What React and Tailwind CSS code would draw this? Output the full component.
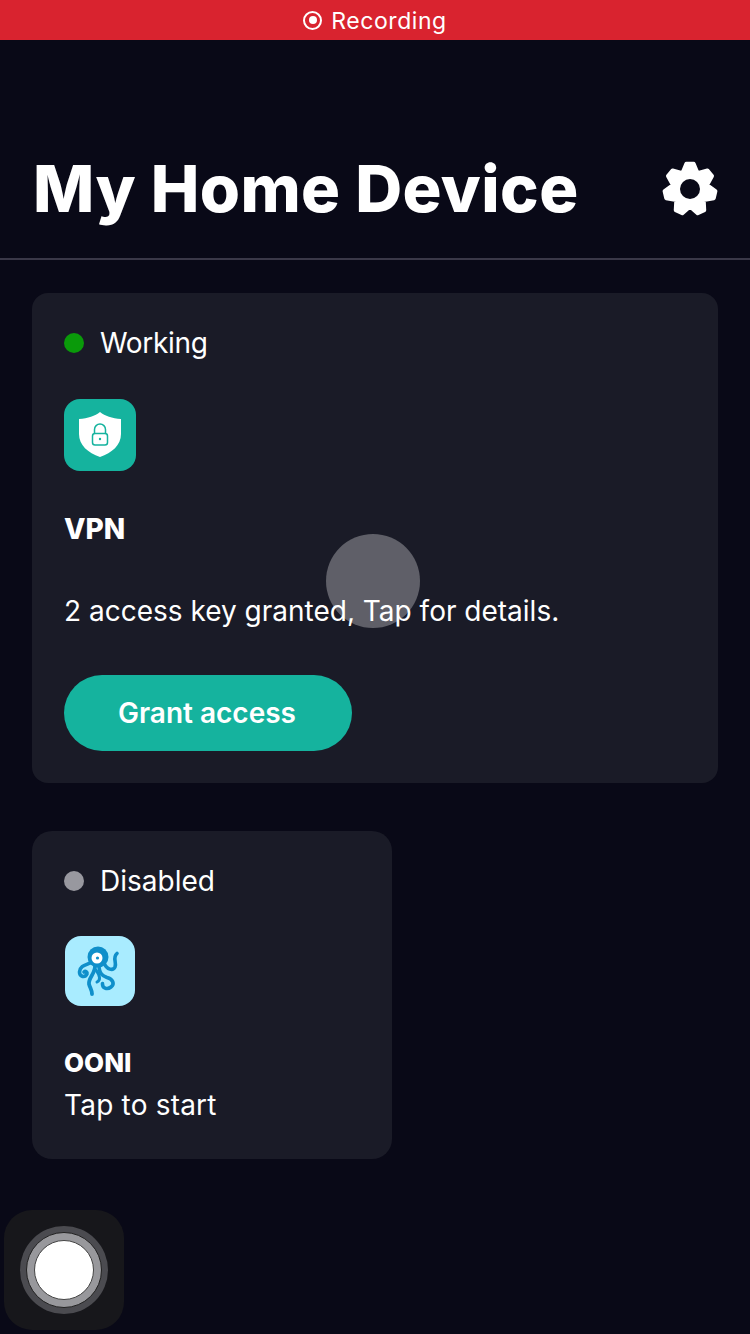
import React from "react";

const Shield = () => (
  <svg width="72" height="72" viewBox="0 0 72 72">
    <path d="M36 13 C41 17 48 19.5 57 20 L57 35 C57 46 48 54 36 58 C24 54 15 46 15 35 L15 20 C24 19.5 31 17 36 13 Z" fill="#fff" />
    <rect x="28.5" y="34.5" width="15" height="11.5" rx="2.5" fill="none" stroke="#15b39e" strokeWidth="1.5" />
    <path d="M30.5 34.5 V30.5 a5.5 5.5 0 0 1 11 0 V34.5" fill="none" stroke="#15b39e" strokeWidth="1.5" />
    <circle cx="36" cy="40" r="1.2" fill="#15b39e" />
  </svg>
);

const Octopus = () => (
  <svg width="70" height="70" viewBox="0 0 70 70">
    <g fill="none" stroke="#0f8fca" strokeLinecap="round">
      <path d="M27 26 C22 29 15 29 14.5 36 C14.5 41 20 42 22 38 C22.5 36 20.5 34.5 19 36" strokeWidth="3.6" />
      <path d="M30 29 C31 37 23 42 24 48 C25 52 27 54 27 58" strokeWidth="3.8" />
      <path d="M34 29 C34 38 38 40 42 41.5 C48 43 50 48 46 51 C42 54 37 52 37.5 47.5" strokeWidth="3.6" />
      <path d="M39 27 C42 34 48 35 50 31 C52 26 47 22 52 17.5" strokeWidth="3.6" />
      <path d="M31 34 C35 40 36 44 32 46" strokeWidth="3" />
    </g>
    <circle cx="33" cy="21" r="10.5" fill="#0f8fca" />
    <circle cx="32" cy="22" r="5.5" fill="#fff" />
    <circle cx="32.5" cy="22" r="1.6" fill="#0f8fca" />
  </svg>
);

const gearPath = (() => {
  const teeth = 7;
  const cx = 30, cy = 30, ro = 25.5, ri = 17.5;
  const step = (Math.PI * 2) / teeth;
  const pts = [];
  for (let i = 0; i < teeth; i++) {
    const a = -Math.PI / 2 + i * step;
    [[-0.5, ri], [-0.16, ro], [0.16, ro], [0.5, ri]].forEach(([k, r]) => {
      const t = a + k * step;
      pts.push(`${(cx + r * Math.cos(t)).toFixed(2)} ${(cy + r * Math.sin(t)).toFixed(2)}`);
    });
  }
  return "M" + pts.join(" L") + " Z";
})();

const Gear = () => (
  <svg width="60" height="60" viewBox="0 0 60 60">
    <path d={gearPath} fill="#fff" stroke="#fff" strokeWidth="4" strokeLinejoin="round" />
    <circle cx="30" cy="30" r="10" fill="#090917" />
  </svg>
);

export default function App() {
  return (
    <div className="relative w-[750px] h-[1334px] overflow-hidden bg-[#090917] text-white font-['Inter','Liberation_Sans',sans-serif]">
      <div className="h-10 bg-[#d9232f] flex items-center justify-center gap-[9px] text-[23px] leading-10 tracking-[0.55px]">
        <span className="w-[19px] h-[19px] rounded-full border-2 border-white flex items-center justify-center">
          <span className="w-2 h-2 rounded-full bg-white" />
        </span>
        <span className="pt-px">Recording</span>
      </div>

      <header className="h-[220px] pt-[103px] pl-[33px] pr-[30px] border-b-2 border-[#3a3848] flex items-start justify-between">
        <h1 className="text-[65px] leading-[92px] font-extrabold tracking-[0.4px]">My Home Device</h1>
        <div className="mt-[16px]"><Gear /></div>
      </header>

      <main className="px-8 pt-[33px] flex flex-col items-start gap-12">
        <section className="w-[686px] h-[490px] rounded-2xl bg-[#1a1b27] p-8">
          <div className="flex items-center gap-[16px] h-9">
            <span className="w-5 h-5 rounded-full bg-[#0a9a0a]" />
            <span className="text-[28px] leading-9 tracking-[-0.3px]">Working</span>
          </div>
          <div className="mt-[38px] w-[72px] h-[72px] rounded-2xl bg-[#15b39e]"><Shield /></div>
          <h2 className="mt-[40px] text-[28px] leading-9 font-extrabold">VPN</h2>
          <p className="mt-[46px] text-[28px] leading-9">2 access key granted, Tap for details.</p>
          <button className="mt-[46px] w-[288px] h-[76px] pr-[2px] rounded-full bg-[#15b39e] text-[28px] font-semibold">Grant access</button>
        </section>

        <section className="w-[360px] h-[328px] rounded-[20px] bg-[#1a1b27] p-8">
          <div className="flex items-center gap-[16px] h-9">
            <span className="w-5 h-5 rounded-full bg-[#98989f]" />
            <span className="text-[28px] leading-9">Disabled</span>
          </div>
          <div className="mt-[37px] ml-px w-[70px] h-[70px] rounded-2xl bg-[#a9ecff]"><Octopus /></div>
          <h2 className="mt-[39px] text-[26px] leading-9 font-extrabold">OONI</h2>
          <p className="mt-[6px] text-[28px] leading-9 tracking-[0.2px]">Tap to start</p>
        </section>
      </main>

      <div className="absolute left-[326px] top-[534px] w-[94px] h-[94px] rounded-full bg-white/30" />

      <div className="absolute left-[4px] top-[1210px] w-[120px] h-[120px] rounded-[28px] bg-[#17171b] flex items-center justify-center">
        <div className="w-[88px] h-[88px] rounded-full bg-[#4b4b50] flex items-center justify-center">
          <div className="w-[76px] h-[76px] rounded-full bg-[#98989c] border border-[#222] flex items-center justify-center">
            <div className="w-[60px] h-[60px] rounded-full bg-white border border-[#444]" />
          </div>
        </div>
      </div>
    </div>
  );
}
